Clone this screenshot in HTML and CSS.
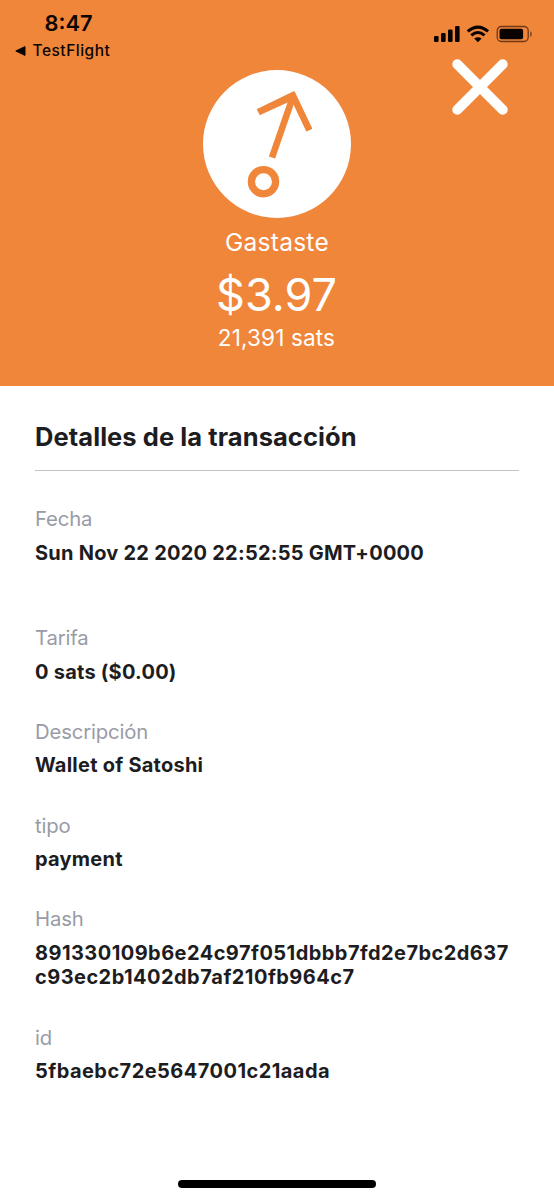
FILE: index.html
```html
<!DOCTYPE html>
<html lang="es">
<head>
<meta charset="utf-8">
<title>Detalles de la transacción</title>
<link rel="stylesheet" href="styles.css">
</head>
<body>
<main class="screen">
  <header class="hero">
    <div class="status">
      <div class="status-left">
        <div class="clock">8:47</div>
        <div class="back">
          <svg class="back-arrow" width="11" height="10" viewBox="0 0 11 10"><path d="M0.8 5 10 0.6V9.4Z" stroke="#0b0400" stroke-width="1" stroke-linejoin="round" fill="#0b0400"/></svg>
          <span>TestFlight</span>
        </div>
      </div>
      <svg class="status-icons" width="100" height="20" viewBox="0 0 100 20">
        <g fill="#080300">
          <rect x="0" y="11" width="4.6" height="6" rx="1.2"/>
          <rect x="7" y="8" width="4.6" height="9" rx="1.2"/>
          <rect x="14" y="4.6" width="4.6" height="12.4" rx="1.2"/>
          <rect x="21" y="1" width="4.6" height="16" rx="1.2"/>
          <rect x="65.5" y="3.8" width="23.6" height="10.4" rx="2"/>
          <path d="M96.3 6.2c2 .9 2 4.7 0 5.600Z" opacity=".55"/>
          <path d="M40.200 13.600Q43.900 10.700 47.600 13.600L43.900 17.200Z"/>
        </g>
        <g fill="none" stroke="#080300" stroke-width="3.100">
          <path d="M33.700 6.400Q43.900-2.200 54.100 6.400"/>
          <path d="M37.300 10.400Q43.900 4.600 50.500 10.400"/>
        </g>
        <rect x="63.200" y="1.500" width="31" height="15" rx="4.200" fill="none" stroke="#6f3816" stroke-width="1.300"/>
      </svg>
    </div>
    <svg class="close" width="60" height="60" viewBox="0 0 60 60"><path d="M7.300 7.200 52.700 52.700M52.700 7.200 7.300 52.700" stroke="#fff" stroke-width="10" stroke-linecap="round"/></svg>
    <svg class="badge" width="148" height="148" viewBox="0 0 148 148">
      <circle cx="74" cy="74" r="74" fill="#fff"/>
      <g fill="none" stroke="#ef863a">
        <circle cx="60.500" cy="111.700" r="12.100" stroke-width="7.300"/>
        <path d="M69 87.500 90.200 26" stroke-width="6.600"/>
      </g>
      <path d="M55 39.700 91 22.200 108.200 58.500 103.800 60.400 89.200 29.500 57.300 44Z" fill="#ef863a" stroke="#ef863a" stroke-width="1.900" stroke-linejoin="round"/>
    </svg>
    <div class="kind">Gastaste</div>
    <div class="amount">$3.97</div>
    <div class="sats">21,391 sats</div>
  </header>
  <section class="details">
    <h1 class="title">Detalles de la transacción</h1>
    <dl class="rows">
      <div class="row row-tall"><dt>Fecha</dt><dd>Sun Nov 22 2020 22:52:55 GMT+0000</dd></div>
      <div class="row"><dt>Tarifa</dt><dd>0 sats ($0.00)</dd></div>
      <div class="row"><dt>Descripción</dt><dd>Wallet of Satoshi</dd></div>
      <div class="row"><dt>tipo</dt><dd>payment</dd></div>
      <div class="row"><dt>Hash</dt><dd class="code">891330109b6e24c97f051dbbb7fd2e7bc2d637<br>c93ec2b1402db7af210fb964c7</dd></div>
      <div class="row"><dt>id</dt><dd class="code">5fbaebc72e5647001c21aada</dd></div>
    </dl>
  </section>
  <div class="home-bar"></div>
</main>
</body>
</html>
```
FILE: styles.css
```css
* { box-sizing: border-box; }
body { margin: 0; font-family: Inter, "Liberation Sans", sans-serif; background: #fff; }
.screen { width: 554px; height: 1200px; display: flex; flex-direction: column; overflow: hidden; }
.hero { position: relative; height: 386px; flex: none; background: #ef863a; color: #fff; display: flex; flex-direction: column; align-items: center; }
.status { width: 100%; height: 70px; flex: none; display: flex; justify-content: space-between; padding: 11px 20px 0 15px; color: #0b0400; }
.clock { font-size: 21.800px; font-weight: 600; line-height: 25px; padding-left: 29.500px; }
.back { display: flex; align-items: center; gap: 6.500px; font-size: 15.500px; font-weight: 500; letter-spacing: 0.500px; line-height: 20px; padding-top: 5px; }
.status-icons { margin-top: 14px; }
.close { position: absolute; left: 450px; top: 57px; }
.badge { flex: none; }
.kind { margin-top: 9px; font-size: 24.500px; letter-spacing: 0.250px; line-height: 30px; }
.amount { margin-top: 11px; padding-right: 1px; font-size: 45px; line-height: 54px; font-weight: 380; }
.sats { margin-top: 2px; padding-right: 1px; font-size: 22.500px; letter-spacing: 0.150px; line-height: 28px; font-weight: 380; }
.details { flex: 1; padding: 35px 35.500px 0 35px; }
.title { margin: 0; height: 50px; border-bottom: 1px solid #c4c4c6; font-size: 25.500px; line-height: 32px; font-weight: 700; letter-spacing: 0.070px; color: #1d1d1f; }
.rows { margin: 36px 0 0; }
.row { padding-bottom: 36px; }
.row-tall { padding-bottom: 61.300px; }
.row dt { font-size: 20.300px; line-height: 24px; font-weight: 400; letter-spacing: -0.150px; color: #999ba6; }
.row dd { margin: 9.500px 0 0; font-size: 20px; line-height: 24.300px; font-weight: 700; letter-spacing: 0.240px; color: #1d1d1f; white-space: nowrap; }
.row .code { letter-spacing: 0.450px; }
.home-bar { align-self: center; width: 198px; height: 8px; margin-bottom: 12px; border-radius: 4px; background: #000; flex: none; }
```
